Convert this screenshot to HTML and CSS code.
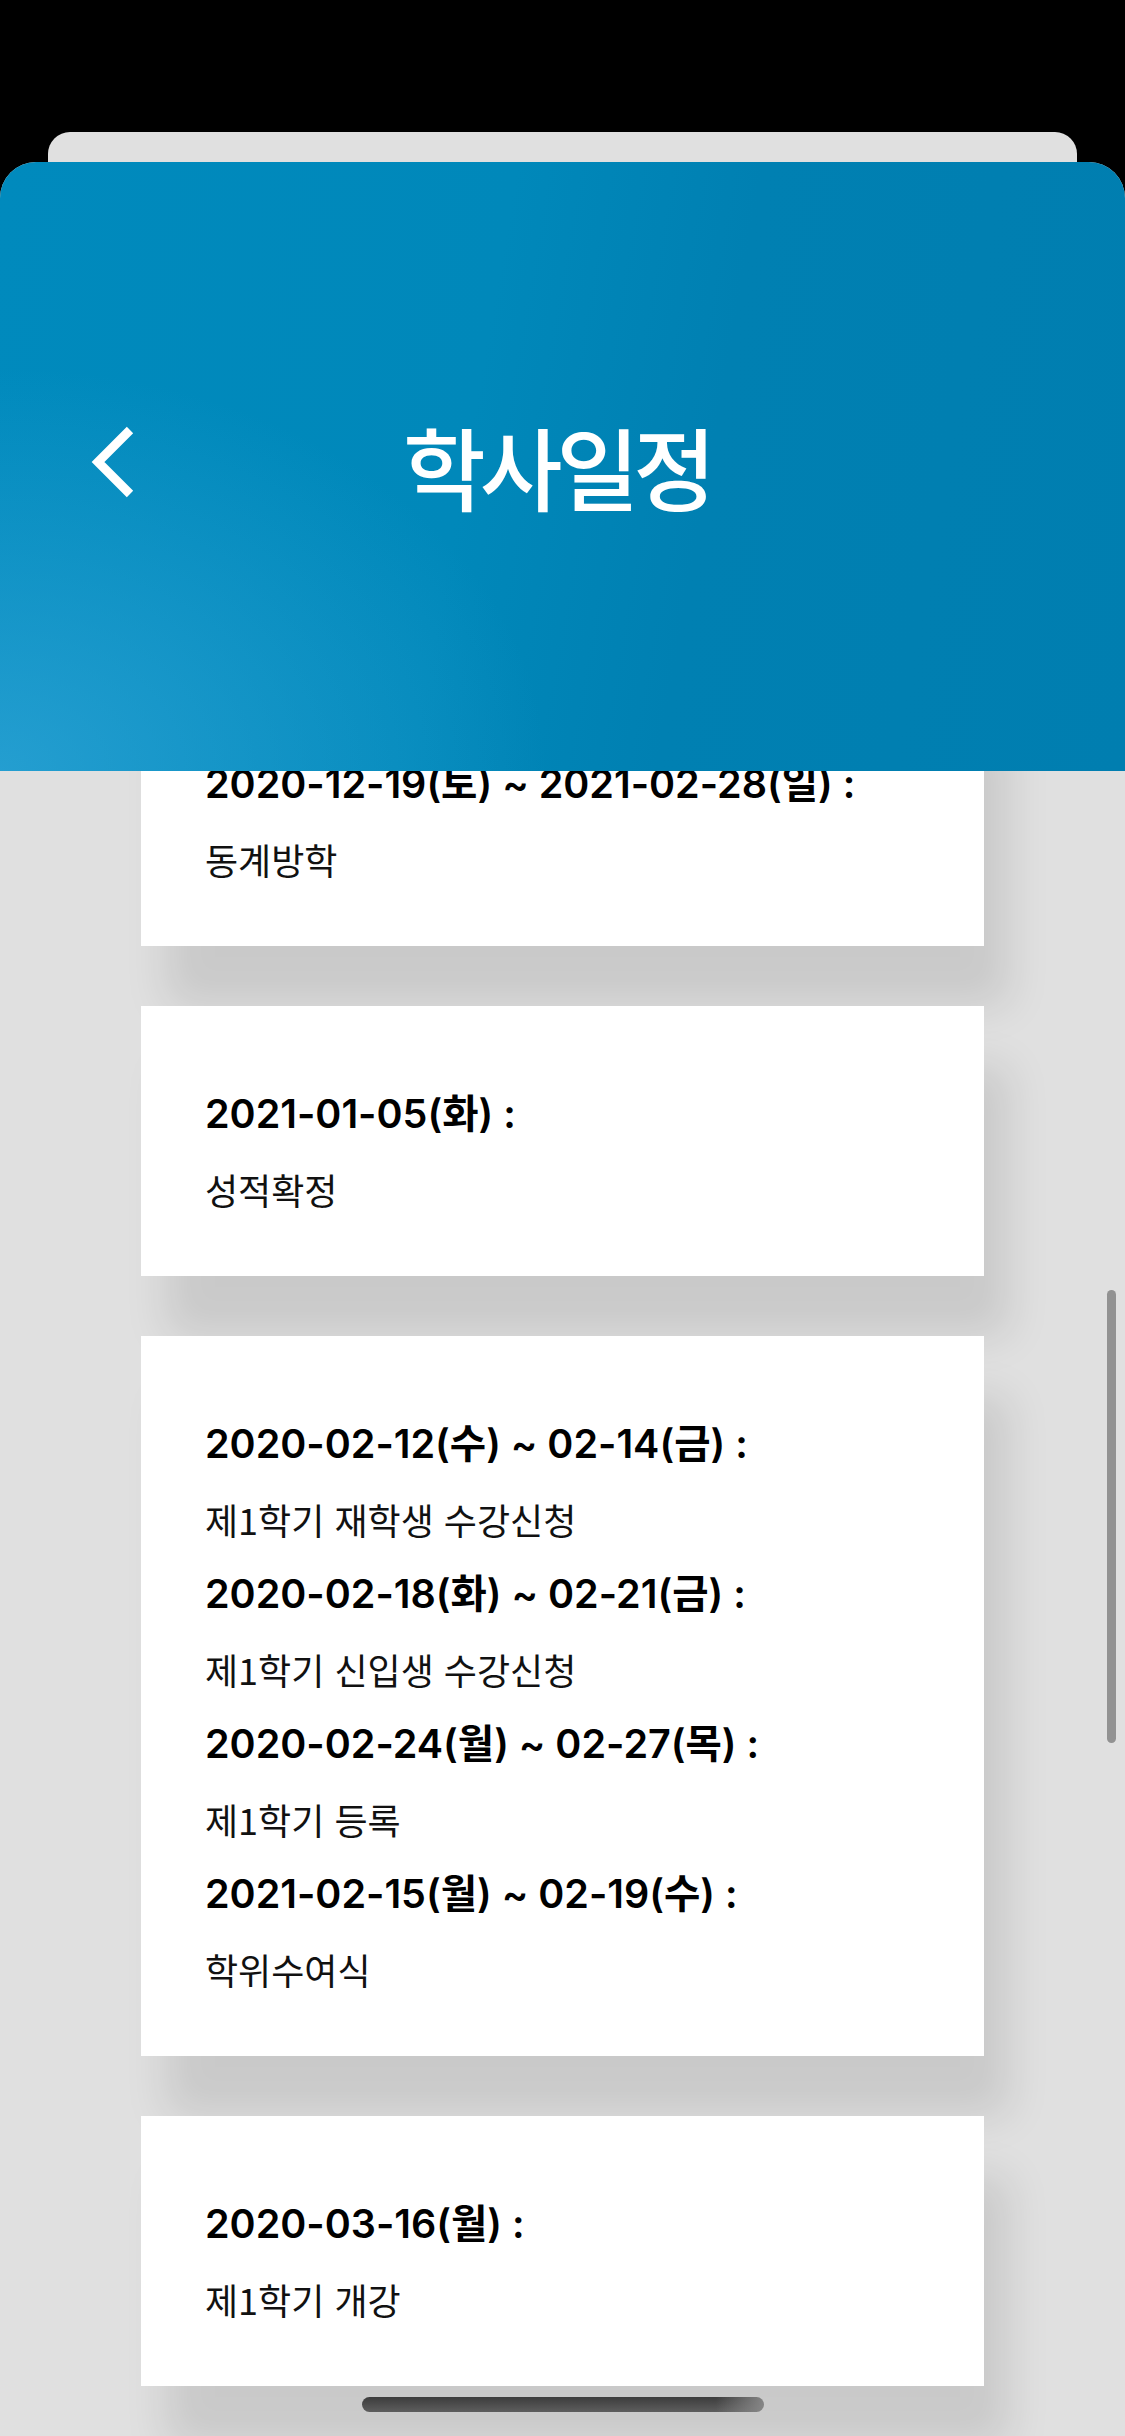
FILE: index.html
```html
<!DOCTYPE html>
<html lang="ko">
<head>
<meta charset="utf-8">
<title>학사일정</title>
<link rel="stylesheet" href="styles.css">
</head>
<body>
<div class="device">
  <div class="statusbar"></div>
  <div class="sheet-back"></div>
  <main class="sheet">
    <header class="header">
      <div class="nav">
        <button class="back" aria-label="뒤로">
          <svg width="50" height="74" viewBox="0 0 50 74"><polyline points="42,5 10,37 42,69" fill="none" stroke="#fff" stroke-width="9"/></svg>
        </button>
        <h1 class="title">학사일정</h1>
        <span></span>
      </div>
    </header>
    <div class="list">
      <section class="card">
        <dl class="entries">
          <dt class="date">2020-12-19(토) ~ 2021-02-28(일) :</dt>
          <dd class="desc">동계방학</dd>
        </dl>
      </section>
      <section class="card">
        <dl class="entries">
          <dt class="date">2021-01-05(화) :</dt>
          <dd class="desc">성적확정</dd>
        </dl>
      </section>
      <section class="card">
        <dl class="entries">
          <dt class="date">2020-02-12(수) ~ 02-14(금) :</dt>
          <dd class="desc">제1학기 재학생 수강신청</dd>
          <dt class="date">2020-02-18(화) ~ 02-21(금) :</dt>
          <dd class="desc">제1학기 신입생 수강신청</dd>
          <dt class="date">2020-02-24(월) ~ 02-27(목) :</dt>
          <dd class="desc">제1학기 등록</dd>
          <dt class="date">2021-02-15(월) ~ 02-19(수) :</dt>
          <dd class="desc">학위수여식</dd>
        </dl>
      </section>
      <section class="card">
        <dl class="entries">
          <dt class="date">2020-03-16(월) :</dt>
          <dd class="desc">제1학기 개강</dd>
        </dl>
      </section>
    </div>
    <div class="scrollbar"></div>
    <div class="home-indicator"></div>
  </main>
</div>
</body>
</html>
```
FILE: styles.css
```css
html, body {
  margin: 0;
  padding: 0;
  background: #000;
}

.device {
  width: 1125px;
  height: 2436px;
  overflow: hidden;
  background: #000;
  font-family: Inter, "Noto Sans CJK KR", sans-serif;
}

.statusbar {
  height: 132px;
  background: #000;
}

.sheet-back {
  height: 30px;
  margin: 0 48px;
  background: #e0e0e0;
  border-radius: 22px 22px 0 0;
}

.sheet {
  position: relative;
  height: 2274px;
  background: #e0e0e0;
  border-radius: 36px 36px 0 0;
  overflow: hidden;
}

.header {
  position: relative;
  z-index: 2;
  height: 609px;
  box-sizing: border-box;
  padding-top: 243px;
  background:
    radial-gradient(ellipse 760px 560px at 0% 100%, rgba(48, 165, 215, 0.75), rgba(48, 165, 215, 0) 72%),
    linear-gradient(100deg, #008abd 0%, #0088ba 42%, #0080b2 62%, #007eb0 100%);
}

.nav {
  display: grid;
  grid-template-columns: 1fr auto 1fr;
  align-items: center;
  height: 120px;
}

.back {
  justify-self: start;
  margin: 0 0 6px 88px;
  width: 50px;
  height: 74px;
  padding: 0;
  border: 0;
  background: none;
}

.back svg {
  display: block;
}

.title {
  margin: 0 12px 0 0;
  font-family: "Noto Sans CJK KR", sans-serif;
  font-size: 90px;
  font-weight: 500;
  letter-spacing: -6px;
  line-height: 120px;
  color: #fff;
}

.list {
  margin-top: -95px;
  padding-left: 141px;
  display: flex;
  flex-direction: column;
  gap: 60px;
}

.card {
  width: 843px;
  box-sizing: border-box;
  padding: 71px 64px 49px;
  background: #fff;
  box-shadow: 25px 60px 40px rgba(0, 0, 0, 0.1);
}

.entries {
  margin: 0;
}

.date {
  margin: 0;
  font-size: 39.5px;
  font-weight: 600;
  line-height: 75px;
  color: #000;
}

.desc {
  margin: 0;
  font-family: "Noto Sans CJK KR", sans-serif;
  font-size: 36px;
  font-weight: 400;
  line-height: 75px;
  color: #111;
}

.scrollbar {
  position: absolute;
  left: 1107px;
  top: 1128px;
  width: 9px;
  height: 453px;
  border-radius: 5px;
  background: #929292;
}

.home-indicator {
  position: absolute;
  left: 362px;
  top: 2235px;
  width: 402px;
  height: 15px;
  border-radius: 8px;
  background:
    linear-gradient(90deg, rgba(140, 140, 140, 0) 88%, rgba(140, 140, 140, 0.9) 100%),
    linear-gradient(180deg, #3c3c3c, #5e5e5e);
}
```
